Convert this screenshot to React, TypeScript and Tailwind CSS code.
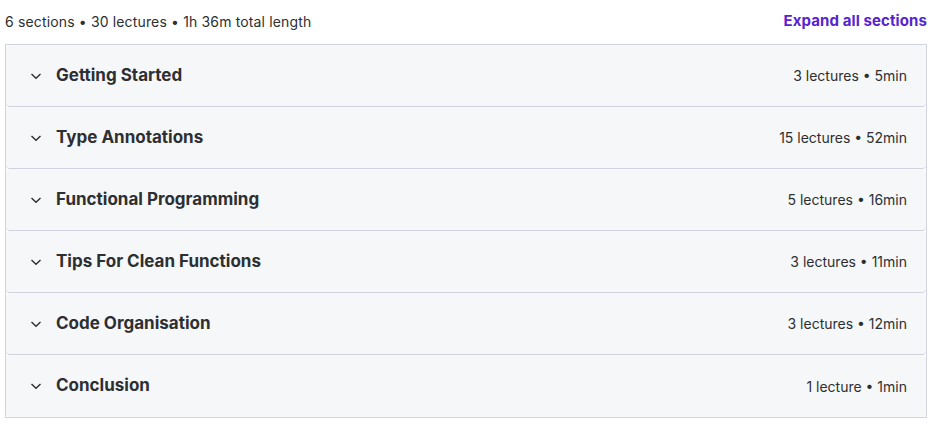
const sections = [
  { title: "Getting Started", meta: "3 lectures • 5min" },
  { title: "Type Annotations", meta: "15 lectures • 52min" },
  { title: "Functional Programming", meta: "5 lectures • 16min" },
  { title: "Tips For Clean Functions", meta: "3 lectures • 11min" },
  { title: "Code Organisation", meta: "3 lectures • 12min" },
  { title: "Conclusion", meta: "1 lecture • 1min" },
];

function Chevron() {
  return (
    <svg width="12" height="12" viewBox="0 0 12 12" fill="none" className="text-[#2d2f31]">
      <path d="M1.5 4 L6 8.2 L10.5 4" stroke="currentColor" strokeWidth="1.4" />
    </svg>
  );
}

export default function App() {
  return (
    <div
      className="w-[932px] h-[425px] bg-white text-[#2d2f31]"
      style={{ fontFamily: "Inter, 'Noto Sans', sans-serif" }}
    >
      <div className="pl-[5px] pr-[5px] pt-[9px]">
        <div className="flex items-center justify-between h-[24px] mb-[11px]">
          <span className="text-[14px] tracking-[0.15px]">
            6 sections • 30 lectures • 1h 36m total length
          </span>
          <button className="text-[15px] font-bold text-[#5624d0] tracking-[0.1px]">
            Expand all sections
          </button>
        </div>
        <div className="border border-[#d1d4e0]">
          {sections.map((s, i) => (
            <div
              key={s.title}
              className={`h-[62px] flex items-center justify-between bg-[#f6f7f9] rounded-[4px] pl-[24px] pr-[19px] ${
                i < sections.length - 1 ? "border-b border-[#d1d4e0]" : ""
              }`}
            >
              <div className="flex items-center gap-[14px]">
                <Chevron />
                <span className="text-[17px] font-bold">{s.title}</span>
              </div>
              <span className="text-[14px]">{s.meta}</span>
            </div>
          ))}
        </div>
      </div>
    </div>
  );
}
